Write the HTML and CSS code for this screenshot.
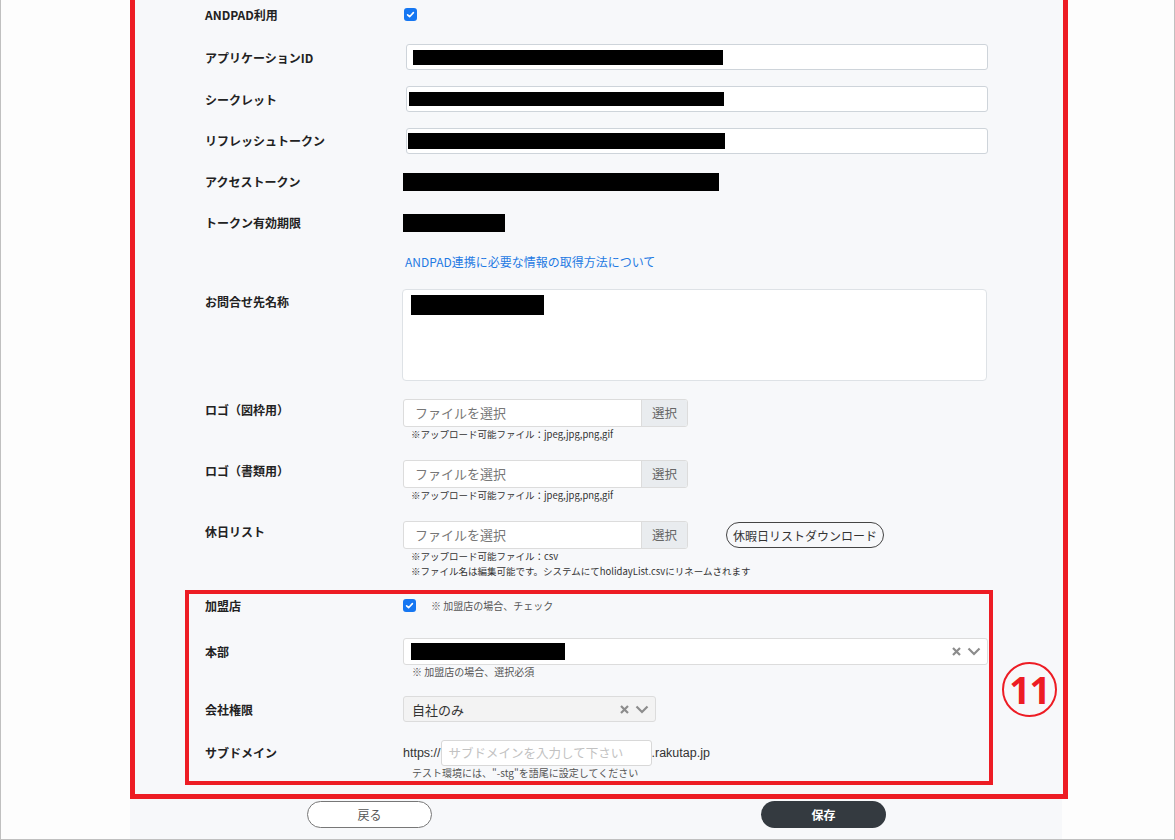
FILE: index.html
```html
<!DOCTYPE html>
<html lang="ja">
<head>
  <meta charset="UTF-8" />
  <meta name="viewport" content="width=device-width, initial-scale=1.0"/>
  <title>ANDPAD連携設定</title>
  <link rel="stylesheet" href="styles.css">
</head>
<body>
  <div class="frame">
    <div class="panel">
      <div class="outline">
        <div class="main">
          <div class="row row-first">
            <div class="label">ANDPAD利用</div>
            <span class="check check-andpad"><svg width="13" height="13" viewBox="0 0 13 13"><path d="M3.6 6.8 L5.6 8.7 L9.4 4.6" fill="none" stroke="#fff" stroke-width="1.6" stroke-linecap="round" stroke-linejoin="round"/></svg></span>
          </div>
          <div class="row">
            <div class="label">アプリケーションID</div>
            <div class="text-input"><span class="mask mask-id"></span></div>
          </div>
          <div class="row">
            <div class="label">シークレット</div>
            <div class="text-input"><span class="mask mask-secret"></span></div>
          </div>
          <div class="row row-tight">
            <div class="label">リフレッシュトークン</div>
            <div class="text-input"><span class="mask mask-refresh"></span></div>
          </div>
          <div class="row row-tight">
            <div class="label">アクセストークン</div>
            <span class="mask mask-access"></span>
          </div>
          <div class="row row-tight">
            <div class="label">トークン有効期限</div>
            <span class="mask mask-expiry"></span>
          </div>
          <div class="row row-link">
            <div class="label"></div>
            <a class="link" href="#">ANDPAD連携に必要な情報の取得方法について</a>
          </div>
          <div class="row row-textarea">
            <div class="label">お問合せ先名称</div>
            <div class="textarea"><span class="mask mask-contact"></span></div>
          </div>

          <div class="row row-file">
            <div class="label">ロゴ（図枠用）</div>
            <div class="field field-file">
              <div class="file-box"><span class="file-name">ファイルを選択</span><span class="file-btn">選択</span></div>
              <div class="hint">※アップロード可能ファイル：jpeg,jpg,png,gif</div>
            </div>
          </div>
          <div class="row row-file">
            <div class="label">ロゴ（書類用）</div>
            <div class="field field-file">
              <div class="file-box"><span class="file-name">ファイルを選択</span><span class="file-btn">選択</span></div>
              <div class="hint">※アップロード可能ファイル：jpeg,jpg,png,gif</div>
            </div>
          </div>
          <div class="row row-file">
            <div class="label">休日リスト</div>
            <div class="field field-file">
              <div class="file-box"><span class="file-name">ファイルを選択</span><span class="file-btn">選択</span></div>
              <div class="hint">※アップロード可能ファイル：csv</div>
              <div class="hint">※ファイル名は編集可能です。システムにてholidayList.csvにリネームされます</div>
            </div>
            <button class="btn-outline">休暇日リストダウンロード</button>
          </div>
        </div>

        <div class="mark">
          <div class="row row-member">
            <div class="label">加盟店</div>
            <span class="check"><svg width="13" height="13" viewBox="0 0 13 13"><path d="M3.6 6.8 L5.6 8.7 L9.4 4.6" fill="none" stroke="#fff" stroke-width="1.6" stroke-linecap="round" stroke-linejoin="round"/></svg></span>
            <span class="note">※ 加盟店の場合、チェック</span>
          </div>
          <div class="row row-hq">
            <div class="label label-hq">本部</div>
            <div class="field">
              <div class="select">
                <span class="mask mask-hq"></span>
                <span class="select-icons">
                  <svg width="11" height="11" viewBox="0 0 11 11"><path d="M2 2 L9 9 M9 2 L2 9" stroke="#8c8c8c" stroke-width="2.2"/></svg>
                  <svg width="14" height="9" viewBox="0 0 14 9"><path d="M1.5 1.5 L7 7 L12.5 1.5" fill="none" stroke="#8c8c8c" stroke-width="2.2"/></svg>
                </span>
              </div>
              <div class="note note-under">※ 加盟店の場合、選択必須</div>
            </div>
          </div>
          <div class="row row-company">
            <div class="label">会社権限</div>
            <div class="select select-company">
              <span class="select-value">自社のみ</span>
              <span class="select-icons">
                <svg width="11" height="11" viewBox="0 0 11 11"><path d="M2 2 L9 9 M9 2 L2 9" stroke="#8c8c8c" stroke-width="2.2"/></svg>
                <svg width="14" height="9" viewBox="0 0 14 9"><path d="M1.5 1.5 L7 7 L12.5 1.5" fill="none" stroke="#8c8c8c" stroke-width="2.2"/></svg>
              </span>
            </div>
          </div>
          <div class="row row-sub">
            <div class="label label-sub">サブドメイン</div>
            <div class="field">
              <div class="domain">
                <span class="domain-text">https://</span>
                <span class="domain-input">サブドメインを入力して下さい</span>
                <span class="domain-text">.rakutap.jp</span>
              </div>
              <div class="note note-under">テスト環境には、"-stg"を語尾に設定してください</div>
            </div>
          </div>
        </div>

        <div class="badge">11</div>
      </div>
      <div class="footer">
        <button class="btn-back">戻る</button>
        <button class="btn-save">保存</button>
      </div>
    </div>
  </div>
</body>
</html>
```

FILE: styles.css
```css
body { margin: 0; font-family: "Noto Sans CJK JP", "Noto Sans", sans-serif; color: #222; background: #fdfdfd; }
.frame { width: 1175px; height: 840px; box-sizing: border-box; border: 1px solid #c0c0c0; border-top: 0; background: #fdfdfd; }
.panel { margin-left: 129px; width: 938px; }
.outline { position: relative; box-sizing: border-box; width: 938px; height: 799px; border: 5px solid #ed1c24; border-top: 0; background: #f7f8fa; }
.main { padding-left: 70px; }

.row { display: flex; align-items: center; height: 42px; }
.row-first { height: 28px; margin-bottom: 8px; }
.row-tight { height: 41px; }
.row-link { height: 36px; }
.label { width: 198px; flex: none; font-size: 12px; font-weight: 700; color: #222; }

.check { display: inline-flex; width: 13px; height: 13px; border-radius: 3px; background: #1677f2; }
.check-andpad { margin-left: 1px; }

.text-input { display: flex; align-items: center; margin-left: 3px; width: 582px; height: 26px; box-sizing: border-box; border: 1px solid #ced4da; border-radius: 3px; background: #fff; }
.mask { display: block; background: #000; flex: none; }
.mask-id { width: 310px; height: 15px; margin-left: 6px; }
.mask-secret { width: 315px; height: 14px; margin-left: 2px; }
.mask-refresh { width: 317px; height: 16px; margin-left: 1px; }
.mask-access { width: 316px; height: 18px; }
.mask-expiry { width: 102px; height: 18px; }
.mask-contact { width: 133px; height: 20px; }
.mask-hq { width: 154px; height: 17px; }

.link { font-size: 12px; color: #1f7ae3; text-decoration: none; margin-left: 2px; }

.row-textarea { margin-top: 10px; height: 92px; align-items: flex-start; }
.row-textarea .label { padding-top: 4px; }
.textarea { margin-left: -1px; width: 585px; height: 92px; box-sizing: border-box; border: 1px solid #dee2e6; border-radius: 4px; background: #fff; padding: 5px 8px; }

.row-file { margin-top: 18px; height: auto; align-items: flex-start; }
.row-file .label { line-height: 22px; }
.field { display: flex; flex-direction: column; }
.field-file { width: 285px; flex: none; }
.file-box { display: flex; width: 285px; height: 28px; box-sizing: border-box; border: 1px solid #dcdcdc; border-radius: 3px; background: #fff; overflow: hidden; }
.file-name { flex: 1; padding-left: 11px; font-size: 13px; line-height: 26px; color: #777; }
.file-btn { width: 45px; text-align: center; font-size: 12.5px; line-height: 26px; color: #666; background: #e9ecef; border-left: 1px solid #dcdcdc; }
.hint { font-size: 9.5px; line-height: 15px; color: #333; padding-left: 8px; white-space: nowrap; }
.btn-outline { margin: 1px 0 0 38px; height: 26px; padding: 0 6px; border: 1px solid #444; border-radius: 13px; background: transparent; font-family: inherit; font-size: 12px; color: #333; }

.mark { margin: 11px 0 0 50px; width: 808px; box-sizing: border-box; border: 4px solid #ed1c24; padding: 0 0 1px 16px; }
.row-member { height: 22px; }
.note { font-size: 10px; color: #555; margin-left: 15px; }
.note-under { margin-left: 0; padding-left: 9px; line-height: 14px; white-space: nowrap; }
.row-hq { margin-top: 22px; height: auto; align-items: flex-start; }
.label-hq { line-height: 27px; }
.select { display: flex; align-items: center; justify-content: space-between; width: 585px; height: 27px; box-sizing: border-box; border: 1px solid #dcdcdc; border-radius: 3px; background: #fff; padding: 0 6px 0 7px; }
.select-icons { display: flex; align-items: center; gap: 5px; }
.row-company { margin-top: 17px; height: 26px; }
.select-company { width: 253px; height: 26px; background: #f3f3f3; padding-left: 8px; }
.select-value { font-size: 13px; color: #333; }
.row-sub { margin-top: 18px; height: auto; align-items: flex-start; }
.label-sub { line-height: 26px; }
.domain { display: flex; align-items: center; height: 26px; }
.domain-text { font-size: 12.5px; color: #333; font-family: "Liberation Sans", Arial, sans-serif; }
.domain-input { width: 211px; height: 26px; box-sizing: border-box; border: 1px solid #d8d8d8; border-radius: 3px; background: #fff; padding-left: 7px; font-size: 12.5px; line-height: 24px; color: #c2c2c2; }

.badge { position: absolute; left: 867px; top: 662px; width: 55px; height: 55px; box-sizing: border-box; border: 2px solid #ed1c24; border-radius: 50%; display: flex; align-items: center; justify-content: center; font-family: "Noto Sans", sans-serif; font-size: 37px; font-weight: 700; color: #ed1c24; letter-spacing: -1px; }

.footer { display: flex; align-items: flex-start; gap: 329px; width: 932px; height: 40px; box-sizing: border-box; padding: 2px 0 0 177px; background: #f7f8fa; }
.btn-back, .btn-save { width: 125px; height: 27px; border-radius: 14px; font-family: inherit; font-size: 12px; cursor: pointer; }
.btn-back { border: 1px solid #777; background: #fff; color: #555; }
.btn-save { border: none; background: #343a40; color: #fff; font-weight: 700; }
```
